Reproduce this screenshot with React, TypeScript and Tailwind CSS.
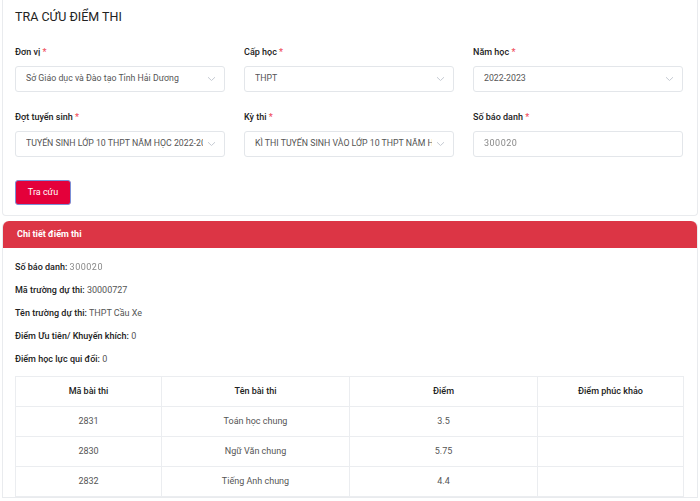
import React from 'react';

const font = { fontFamily: 'Roboto, "Noto Sans", sans-serif' };

function Chevron() {
  return (
    <svg width="9" height="6" viewBox="0 0 9 6" className="shrink-0">
      <path d="M1 1.2 L4.5 4.5 L8 1.2" fill="none" stroke="#c6cbd3" strokeWidth="1" />
    </svg>
  );
}

function Label({ text }: { text: string }) {
  return (
    <div className="text-[9px] font-medium text-[#222] h-[14px] leading-[14px] mb-[7px]">
      {text} <span className="text-[#ef4d5c]">*</span>
    </div>
  );
}

function SelectBox({ value }: { value: string }) {
  return (
    <div className="h-[26px] border border-[#e3e6ea] rounded-[3px] bg-white flex items-center pl-[10px] pr-[8px] gap-1">
      <span className="flex-1 text-[8.75px] text-[#555] whitespace-nowrap overflow-hidden">{value}</span>
      <Chevron />
    </div>
  );
}

function Field({ label, value, select = true }: { label: string; value: React.ReactNode; select?: boolean }) {
  return (
    <div className="w-[210px]">
      <Label text={label} />
      {select ? (
        <SelectBox value={value as string} />
      ) : (
        <div className="h-[26px] border border-[#e3e6ea] rounded-[3px] bg-white flex items-center pl-[10px]">
          {value}
        </div>
      )}
    </div>
  );
}

const Hidden = () => (
  <span className="text-[9px] text-[#888] blur-[0.7px] tracking-[0.5px]">300020</span>
);

const info: [string, React.ReactNode][] = [
  ['Số báo danh:', <Hidden />],
  ['Mã trường dự thi:', '30000727'],
  ['Tên trường dự thi:', 'THPT Cầu Xe'],
  ['Điểm Ưu tiên/ Khuyến khích:', '0'],
  ['Điểm học lực qui đổi:', '0'],
];

const rows = [
  ['2831', 'Toán học chung', '3.5', ''],
  ['2830', 'Ngữ Văn chung', '5.75', ''],
  ['2832', 'Tiếng Anh chung', '4.4', ''],
];

export default function App() {
  return (
    <div className="w-[700px] h-[501px] bg-white overflow-hidden px-[2px]" style={font}>
      {/* search form */}
      <div className="border border-[#e9ebee] border-t-0 rounded-b-[4px] px-[12px] pt-[8px] pb-[10px]">
        <h1 className="text-[12.5px] text-[#222] leading-[18px] mb-[19px]">TRA CỨU ĐIỂM THI</h1>
        <div className="flex gap-[19px]">
          <Field label="Đơn vị" value="Sở Giáo dục và Đào tạo Tỉnh Hải Dương" />
          <Field label="Cấp học" value="THPT" />
          <Field label="Năm học" value="2022-2023" />
        </div>
        <div className="flex gap-[19px] mt-[18px]">
          <Field label="Đợt tuyển sinh" value="TUYỂN SINH LỚP 10 THPT NĂM HỌC 2022-2023" />
          <Field label="Kỳ thi" value="KÌ THI TUYỂN SINH VÀO LỚP 10 THPT NĂM HỌC 2022-2023" />
          <Field label="Số báo danh" value={<Hidden />} select={false} />
        </div>
        <button className="mt-[23px] w-[56px] h-[25px] bg-[#e4003a] text-white text-[9px] rounded-[3px] border border-[#7b8fd6]">
          Tra cứu
        </button>
      </div>

      {/* result panel */}
      <div className="mt-[5px] border border-[#e9ebee] border-t-0 rounded-t-[6px]">
        <div className="h-[27px] bg-[#dc3545] rounded-t-[6px] flex items-center px-[14px]">
          <span className="text-white text-[9px] font-bold">Chi tiết điểm thi</span>
        </div>
        <div className="px-[12px] pt-[12px]">
          {info.map(([k, v], i) => (
            <div key={i} className="text-[9px] leading-[14px] h-[23px]">
              <span className="font-medium text-[#222]">{k}</span> <span className="text-[#555]">{v}</span>
            </div>
          ))}
          <table className="mt-[1px] w-[668px] border-collapse text-[9px] table-fixed">
            <colgroup>
              <col className="w-[146px]" />
              <col className="w-[188px]" />
              <col className="w-[188px]" />
              <col className="w-[146px]" />
            </colgroup>
            <thead>
              <tr className="h-[30px]">
                {['Mã bài thi', 'Tên bài thi', 'Điểm', 'Điểm phúc khảo'].map((h) => (
                  <th key={h} className="border border-[#ebedf0] font-medium text-[#222] text-center">
                    {h}
                  </th>
                ))}
              </tr>
            </thead>
            <tbody>
              {rows.map((r) => (
                <tr key={r[0]} className="h-[30px]">
                  {r.map((c, j) => (
                    <td key={j} className="border border-[#ebedf0] text-center text-[#555]">
                      {c}
                    </td>
                  ))}
                </tr>
              ))}
            </tbody>
          </table>
        </div>
      </div>
    </div>
  );
}
